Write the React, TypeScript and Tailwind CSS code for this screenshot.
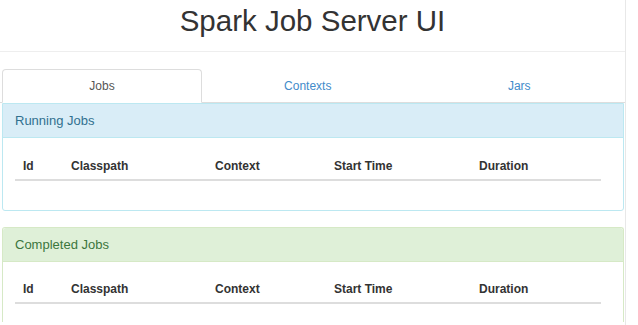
const columns = ["Id", "Classpath", "Context", "Start Time", "Duration"];

function JobTable() {
    return (
        <div className="w-[586px] border-b-2 border-[#dddddd] grid grid-cols-[48px_144px_119px_145px_1fr] text-[12px] font-bold text-[#333333]">
            {columns.map((c) => (
                <div key={c} className="px-2 pt-[10px] pb-[5px] leading-[15px]">
                    {c}
                </div>
            ))}
        </div>
    );
}

function Panel({ title, tone }: { title: string; tone: "info" | "success" }) {
    const info = tone === "info";
    return (
        <div
            className={
                info
                    ? "rounded-b-[3px] border border-[#bce8f1] bg-white"
                    : "rounded-t-[3px] border border-b-0 border-[#d6e9c6] bg-white"
            }
        >
            <div
                className={
                    info
                        ? "h-[34px] flex items-center px-3 pt-px bg-[#d9edf7] text-[#31708f] text-[13px] border-b border-[#bce8f1]"
                        : "h-[34px] flex items-center px-3 pt-px bg-[#dff0d8] text-[#3c763d] text-[13px] border-b border-[#d6e9c6] rounded-t-[3px]"
                }
            >
                {title}
            </div>
            <div className={info ? "pl-3 pt-[11px] pb-[29px]" : "pl-3 pt-[10px] pb-[18px]"}>
                <JobTable />
            </div>
        </div>
    );
}

export default function App() {
    return (
        <div className="h-[325px] w-[638px] overflow-hidden bg-white font-['Liberation_Sans',Arial,sans-serif]">
            <div className="w-[626px] h-full border-r border-[#e8e8e8]">
                <h1 className="h-[52px] border-b border-[#eeeeee] text-center text-[29.5px] leading-[42px] text-[#333333]">
                    Spark Job Server UI
                </h1>

                <div className="mt-[17px] pl-[2px] flex border-b border-[#dddddd] text-[12px]">
                    <div className="w-[200px] h-[34px] -mb-px flex items-center justify-center rounded-t-[4px] border border-[#dddddd] border-b-white bg-white text-[#555555]">
                        Jobs
                    </div>
                    <div className="flex-1 h-[33px] flex items-center justify-center text-[#428bca]">Contexts</div>
                    <div className="flex-1 h-[33px] flex items-center justify-center text-[#428bca]">Jars</div>
                </div>

                <div className="pl-[2px] pr-[1px]">
                    <Panel title="Running Jobs" tone="info" />
                    <div className="h-[16px]" />
                    <Panel title="Completed Jobs" tone="success" />
                </div>
            </div>
        </div>
    );
}
